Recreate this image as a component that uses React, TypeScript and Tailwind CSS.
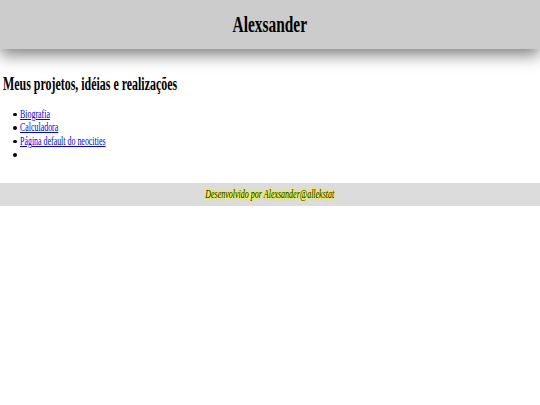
export default function App() {
  const links = ['Biografia', 'Calculadora', 'Página default do neocities'];

  return (
    <div className="min-h-[405px] bg-white font-['Liberation_Serif',serif] text-black">
      {/* Header */}
      <header className="relative z-10 flex h-[49px] items-center justify-center bg-[#cccccc] shadow-[0_6px_16px_rgba(0,0,0,0.5)]">
        <h1 className="inline-block scale-x-[0.655] text-[23.5px] font-bold leading-none">Alexsander</h1>
      </header>

      {/* Content */}
      <main className="px-[3px] pt-[24px] pb-[21px]">
        <h2 className="origin-left scale-x-[0.615] whitespace-nowrap text-[19.4px] font-bold leading-[22px]">
          Meus projetos, idéias e realizações
        </h2>
        <ul className="mt-[13px] pl-[10px] text-[12px] leading-[13.4px]">
          {links.map((l) => (
            <li key={l} className="flex items-center">
              <span className="mr-[3.5px] h-[3.5px] w-[3.5px] rounded-full bg-black" />
              <a href="#" className="inline-block origin-left scale-x-[0.66] whitespace-nowrap text-[#0000ee] underline">
                {l}
              </a>
            </li>
          ))}
          <li className="flex h-[13.4px] items-center">
            <span className="h-[3.5px] w-[3.5px] rounded-full bg-black" />
          </li>
        </ul>
      </main>

      {/* Footer */}
      <footer className="flex h-[23px] items-center justify-center bg-[#dcdcdc]">
        <span className="inline-block scale-x-[0.64] whitespace-nowrap text-[12.5px] italic text-[#1a1a00] [text-shadow:0_0_3px_#ffff00,0_0_4px_#ffff00,0_0_5px_#f0f000]">
          Desenvolvido por Alexsander@allekstat
        </span>
      </footer>
    </div>
  );
}
